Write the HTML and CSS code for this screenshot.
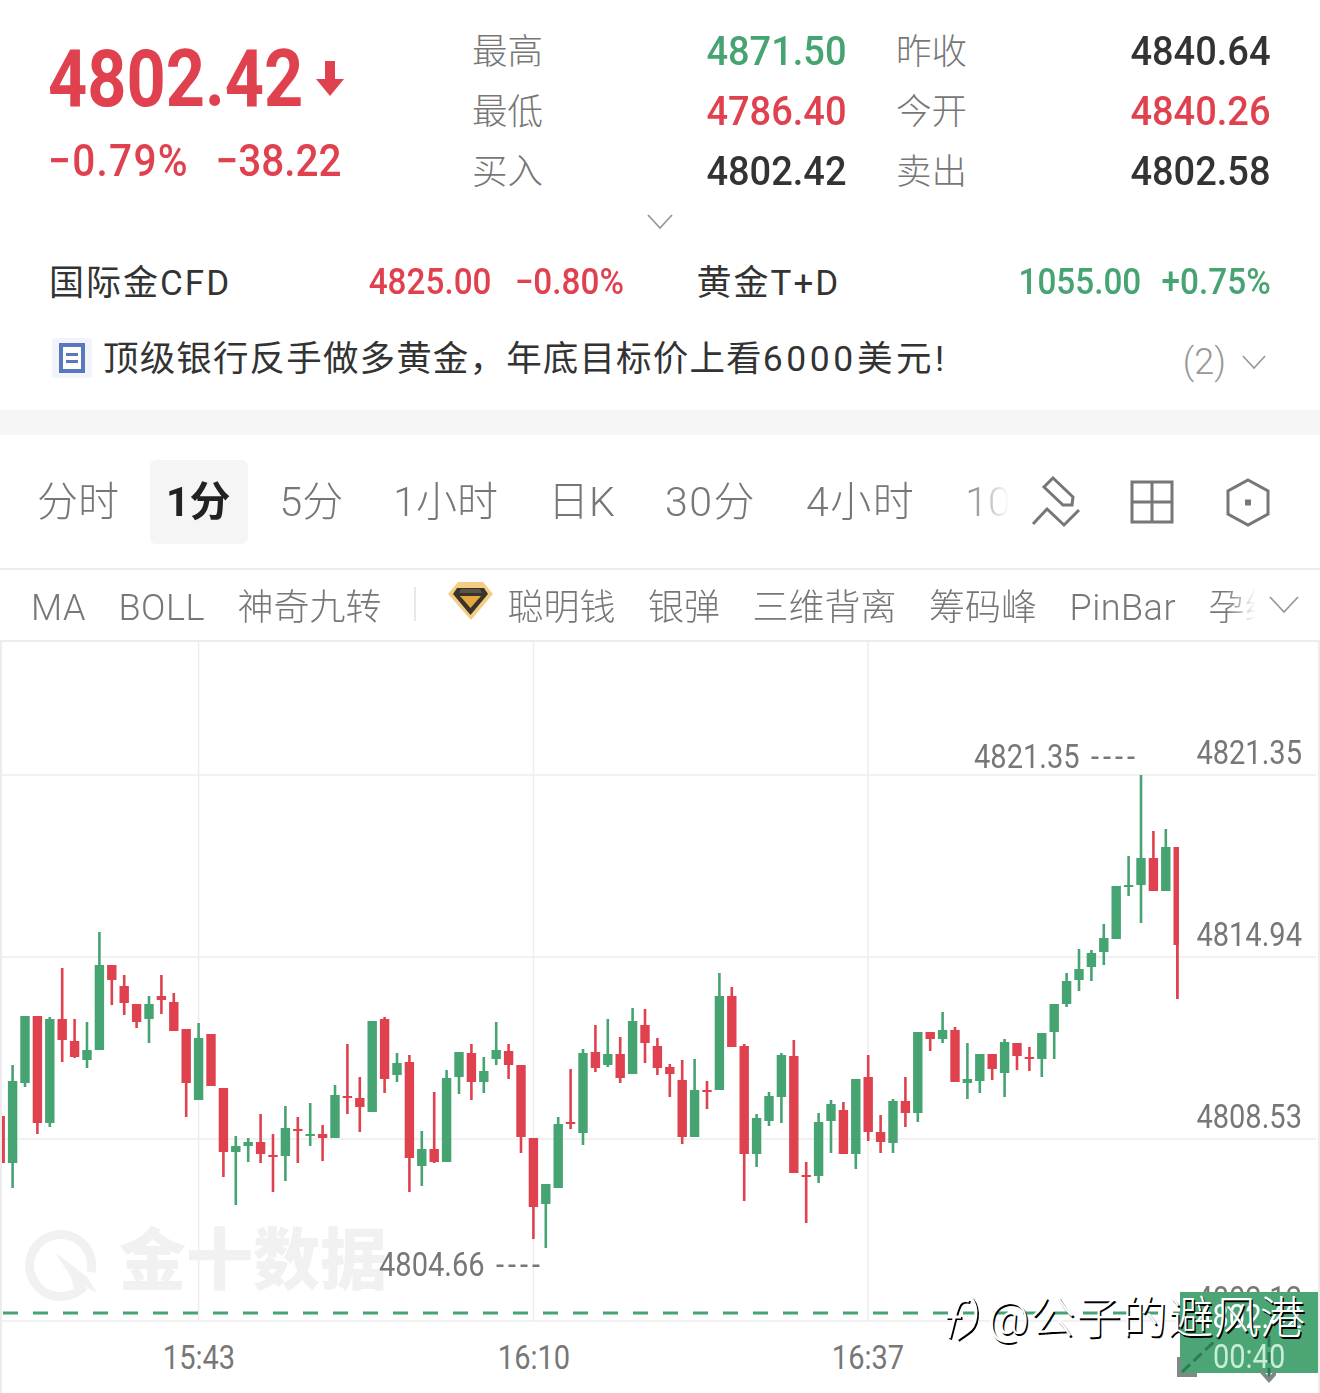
FILE: index.html
```html
<!DOCTYPE html>
<html lang="zh-CN">
<head>
	<meta charset="UTF-8">
	<title>现货黄金</title>
	<link rel="stylesheet" href="styles.css">
</head>
<body>
	<section class="summary">
		<div class="quote">
			<div class="price_box">
				<div class="price">
					<span class="price_num">4802.42</span>
					<svg class="price_arrow" viewBox="0 0 28 35"><path d="M9 0h10v18h9L14 35 0 18h9z"/></svg>
				</div>
				<div class="change"><span>−0.79%</span><span>−38.22</span></div>
			</div>
			<div class="stats">
				<div class="stat"><span class="stat_name">最高</span><span class="num up">4871.50</span></div>
				<div class="stat"><span class="stat_name">昨收</span><span class="num">4840.64</span></div>
				<div class="stat"><span class="stat_name">最低</span><span class="num down">4786.40</span></div>
				<div class="stat"><span class="stat_name">今开</span><span class="num down">4840.26</span></div>
				<div class="stat"><span class="stat_name">买入</span><span class="num">4802.42</span></div>
				<div class="stat"><span class="stat_name">卖出</span><span class="num">4802.58</span></div>
			</div>
		</div>
		<div class="more">
			<svg class="chevron" viewBox="0 0 26 16"><path d="M1 1l12 13L25 1"/></svg>
		</div>
		<div class="markets">
			<div class="market">
				<span class="market_name">国际金CFD</span>
				<span class="market_vals down"><span>4825.00</span><span>−0.80%</span></span>
			</div>
			<div class="market">
				<span class="market_name">黄金T+D</span>
				<span class="market_vals up"><span>1055.00</span><span>+0.75%</span></span>
			</div>
		</div>
		<div class="news">
			<span class="news_icon"><span class="news_doc"></span></span>
			<span class="news_title">顶级银行反手做多黄金，年底目标价上看<span class="news_wide">6000美元!</span></span>
			<span class="news_count">(2)</span>
			<svg class="chevron news_more" viewBox="0 0 26 16"><path d="M1 1l12 13L25 1"/></svg>
		</div>
	</section>

	<div class="band"></div>

	<nav class="periods">
		<div class="period_list">
			<span class="period">分时</span>
			<span class="period on">1分</span>
			<span class="period">5分</span>
			<span class="period">1小时</span>
			<span class="period">日K</span>
			<span class="period period_wide">30分</span>
			<span class="period period_wide">4小时</span>
			<span class="period">10</span>
		</div>
		<div class="tools">
			<svg class="tool" viewBox="70 24 52 52"><path d="M93 26l20 19-1 8h-9L84 35zM73 72l14-15 17 16 15-15"/></svg>
			<svg class="tool" viewBox="0 0 52 52"><path d="M6 6h40v40H6zM26 6v40M6 26h40"/></svg>
			<svg class="tool" viewBox="0 0 52 52"><path d="M26 4l20 11v23L26 49 6 38V15z"/><rect class="tool_dot" x="23" y="23.5" width="6" height="6"/></svg>
		</div>
	</nav>

	<nav class="indicators">
		<div class="indicator_list">
			<span class="latin">MA</span>
			<span class="latin">BOLL</span>
			<span>神奇九转</span>
			<i class="divider"></i>
			<span class="smart">
				<svg class="diamond" viewBox="0 0 45 38">
					<path class="gem_rim" d="M10 0h25l10 12-22 26L0 12z"/>
					<path class="gem_dark" d="M9 6h27l4 6-17.500 21L5 12z"/>
					<path class="gem_gold" d="M12 14h21L22.500 26z"/>
					<path class="gem_top" d="M13 7h19l2 4H11z"/>
				</svg>
				<b class="smart_name">聪明钱</b>
			</span>
			<span>银弹</span>
			<span>三维背离</span>
			<span>筹码峰</span>
			<span class="latin">PinBar</span>
			<span>孕线</span>
		</div>
		<svg class="chevron indicator_more" viewBox="0 0 30 18"><path d="M1 1l14 15L29 1"/></svg>
	</nav>

	<div class="chart">
		<svg class="plot" viewBox="0 642 1320 751">
			<path class="grid" d="M2 775H1316M2 957H1316M2 1139H1316M2 1321H1316M198.600 642V1321M533.500 642V1321M868 642V1321"/>
			<g class="logo_mark">
				<path class="logo_ring" d="M84 1286A31 31 0 1 1 91 1272"/>
				<path class="logo_arrow" d="M55 1252l32 25 10 16-14-8-9 4-3-12z"/>
			</g>
			<line class="last_line" x1="2" y1="1313" x2="1180" y2="1313"/>
			<g id="candles"></g>
			<path class="frame" d="M1 642V1393M1319 642V1393"/>
		</svg>

		<div class="logo_text">金十数据</div>

		<div class="axis">
			<span>4821.35</span>
			<span>4814.94</span>
			<span>4808.53</span>
			<span>4802.12</span>
		</div>
		<div class="extreme extreme_high"><span>4821.35</span><i>----</i></div>
		<div class="extreme extreme_low"><span>4804.66</span><i>----</i></div>
		<div class="times">
			<span>15:43</span>
			<span>16:10</span>
			<span>16:37</span>
		</div>

		<div class="last_tag">
			<span>4802.42</span>
			<span class="countdown">00:40</span>
		</div>
		<svg class="zoom_arrows" viewBox="0 0 100 60">
			<path class="zoom_dash" d="M6 48L42 14M93 12V55"/>
			<path class="zoom_head" d="M3 33v18h18M85 47l8 9 8-9"/>
		</svg>

		<div class="stamp">
			<svg class="stamp_icon" viewBox="0 0 42 50">
				<path class="stamp_under" d="M8 44c4-14 6-26 9-32 2-5 7-6 11-5M5 23h15M30 4c8 10 6 28-4 34l-10 7"/>
				<path class="stamp_over" d="M8 44c4-14 6-26 9-32 2-5 7-6 11-5M5 23h15M30 4c8 10 6 28-4 34l-10 7"/>
			</svg>
			<span>@公子的避风港</span>
		</div>
	</div>

	<script src="chart.js"></script>
</body>
</html>
```

FILE: styles.css
```css
*{box-sizing:border-box;}
body{margin:0;width:1320px;height:1393px;overflow:hidden;background:#fff;color:#333;font-family:Roboto,"Noto Sans CJK SC",sans-serif;}
i{font-style:normal;}
b{font-weight:inherit;}

.down{color:#e0414f;}
.up{color:#46a372;}

.summary{height:410px;padding:0 49px 0 50px;}
.quote{display:flex;height:200px;}
.price_box{width:423px;padding-top:40px;color:#e0414f;}
.price{display:flex;align-items:center;height:78px;margin-left:-2px;font-size:80px;font-weight:700;}
.price_num{flex:none;width:268px;transform:scaleX(.855);transform-origin:left center;white-space:nowrap;}
.price_arrow{width:28px;height:35px;margin-top:-2px;fill:#e0414f;}
.change{display:flex;margin:21px 0 0 -2px;font-size:45px;line-height:44px;font-weight:500;transform:scaleX(.9);transform-origin:left center;}
.change span:first-child{width:186px;letter-spacing:1.500px;}
.stats{display:grid;grid-template-columns:374px 374px;grid-auto-rows:60px;column-gap:50px;width:798px;padding-top:21px;}
.stat{display:flex;justify-content:space-between;align-items:center;}
.stat_name{width:234px;margin-left:-1px;padding-bottom:6px;font-size:35.500px;font-weight:300;color:#777;}
.num{font-size:40px;font-weight:500;transform:scaleX(.95);transform-origin:right center;}
.stat .num:not(.up):not(.down){color:#333;}

.chevron{display:block;fill:none;stroke:#999;stroke-width:1.800;}
.more{display:flex;justify-content:center;width:1220px;height:64px;padding-top:14px;}
.more .chevron{width:26px;height:16px;}

.markets{display:flex;gap:74px;height:36px;align-items:center;}
.market{display:flex;justify-content:space-between;align-items:center;width:574px;}
.market_name{margin-left:-1px;padding-bottom:6px;font-size:35px;letter-spacing:2px;}
.market_vals{display:flex;gap:25px;font-size:36px;font-weight:500;transform:scaleX(.925);transform-origin:right center;}
.market_vals.up{gap:22px;}

.news{display:flex;align-items:center;height:60px;margin-top:28px;}
.news_icon{display:flex;justify-content:center;align-items:center;width:40px;height:40px;margin-left:2px;background:#f2f4fa;border-radius:3px;}
.news_doc{width:26px;height:30px;background:linear-gradient(#5a76bf,#5a76bf) 3px 6px/12px 3px no-repeat,linear-gradient(#5a76bf,#5a76bf) 3px 13px/12px 3px no-repeat,#fff;border:4px solid #5a76bf;}
.news_title{margin-left:11px;padding-bottom:6px;font-size:35.500px;letter-spacing:1.150px;color:#333;white-space:nowrap;}
.news_wide{letter-spacing:3.600px;}
.news_count{margin-left:auto;padding-top:8px;font-size:36px;font-weight:300;color:#999;}
.news_more{width:24px;height:15px;margin:8px 5px 0 16px;}

.band{height:25px;background:#f6f6f6;}

.periods{display:flex;align-items:center;height:135px;padding-left:19px;border-bottom:2px solid #ececec;}
.period_list{display:flex;gap:14px;width:1011px;overflow:hidden;flex:none;-webkit-mask-image:linear-gradient(to right,#000 945px,transparent 990px);mask-image:linear-gradient(to right,#000 945px,transparent 990px);}
.period{flex:none;height:84px;line-height:84px;padding:0 18px;font-size:41px;font-weight:300;color:#777;border-radius:6px;}
.period_wide{letter-spacing:1.500px;}
.period.on{margin-left:-1px;padding:0 17px 0 16px;background:#f5f5f5;color:#222;font-weight:700;}
.tools{display:flex;gap:44px;}
.tool{width:52px;height:52px;fill:none;stroke:#777;stroke-width:3;}
.tool_dot{fill:#777;stroke:none;}

.indicators{display:flex;align-items:center;height:72px;padding:0 21px 2px 31px;border-bottom:2px solid #ececec;}
.indicator_list{display:flex;align-items:baseline;gap:32.500px;width:1236px;overflow:hidden;font-size:36px;font-weight:300;color:#777;white-space:nowrap;-webkit-mask-image:linear-gradient(to right,#000 1195px,transparent 1225px);mask-image:linear-gradient(to right,#000 1195px,transparent 1225px);}
.indicator_list span{flex:none;}
.indicator_list .latin{letter-spacing:.5px;}
.divider{flex:none;align-self:center;width:2px;height:34px;background:#e8e8e8;}
.smart{display:flex;align-items:baseline;gap:14px;}
.diamond{align-self:center;width:45px;height:38px;margin-bottom:6px;}
.gem_rim{fill:#f3cd86;}
.gem_dark{fill:#3b3327;}
.gem_gold{fill:#e5a83e;}
.gem_top{fill:#5a5348;}
.indicator_more{flex:none;width:30px;height:18px;margin:2px 0 0 auto;}

.chart{position:relative;height:751px;}
.plot{display:block;width:1320px;height:751px;}
.grid{fill:none;stroke:#ededed;stroke-width:1.500;}
.logo_ring{fill:none;stroke:#f1f1f1;stroke-width:9;}
.logo_arrow{fill:#f1f1f1;}
.last_line{stroke:#46a372;stroke-width:3;stroke-dasharray:15 15;stroke-dashoffset:-1;}
.frame{fill:none;stroke:#ececec;stroke-width:2;}

.logo_text{position:absolute;left:119px;top:574px;font-size:67px;line-height:90px;font-weight:900;color:#f1f1f1;}

.axis{position:absolute;top:91px;right:18px;display:flex;flex-direction:column;gap:142px;align-items:flex-end;}
.axis span,.extreme,.times span,.last_tag span{font-size:33px;line-height:40px;color:#777;}
.axis span{transform:scaleX(.88);transform-origin:right center;}
.extreme{position:absolute;display:flex;gap:13px;transform:scaleX(.88);transform-origin:left center;}
.extreme_high{left:974px;top:95px;}
.extreme_low{left:379px;top:603px;}
.extreme i{letter-spacing:4.500px;}

.times{position:absolute;left:0;top:696px;}
.times span{position:absolute;transform:translateX(-50%) scaleX(.88);white-space:nowrap;}
.times span:nth-child(1){left:199px;}
.times span:nth-child(2){left:533.500px;}
.times span:nth-child(3){left:868px;}

.last_tag{position:absolute;left:1180px;top:650px;display:flex;flex-direction:column;align-items:center;justify-content:space-between;width:138px;height:81px;padding:5px 0 0;background:#4ca575;}
.last_tag span{color:#fff;transform:scaleX(.88);}
.last_tag .countdown{color:#c9edd9;}
.zoom_arrows{position:absolute;left:1176px;top:682px;width:100px;height:60px;fill:none;}
.zoom_dash{stroke:#2d7a54;stroke-width:3;stroke-dasharray:11 5;}
.zoom_head{stroke:#808a85;stroke-width:4;}

.stamp{position:absolute;left:941px;top:652px;display:flex;align-items:center;gap:2px;font-size:45px;font-weight:300;letter-spacing:1px;line-height:50px;color:#fff;text-shadow:1.500px 1.500px 0 #000;}
.stamp span{padding-left:3px;}
.stamp_icon{width:42px;height:50px;fill:none;overflow:visible;}
.stamp_under{stroke:#000;stroke-width:3;transform:translate(1.500px,1.500px);}
.stamp_over{stroke:#fff;stroke-width:3;}
```

FILE: chart.js
```js
// high, low, body top, body bottom, colour. All y values are page pixels.
var bars = [
	[1116,1163,1116,1163,"r"],[1065,1188,1081,1163,"g"],[1016,1087,1016,1083,"g"],[1016,1134,1016,1123,"r"],
	[1017,1127,1019,1123,"g"],[968,1062,1019,1040,"r"],[1019,1058,1041,1057,"r"],[1022,1068,1050,1060,"g"],
	[932,1050,965,1050,"g"],[965,1005,965,980,"r"],[975,1015,986,1003,"r"],[1004,1028,1004,1022,"r"],
	[996,1043,1004,1019,"g"],[975,1014,996,1000,"r"],[993,1031,1002,1031,"r"],[1029,1117,1029,1083,"r"],
	[1023,1100,1038,1100,"g"],[1034,1086,1034,1086,"r"],[1088,1177,1088,1152,"r"],[1136,1205,1146,1152,"g"],
	[1138,1162,1142,1146,"g"],[1114,1163,1142,1154,"r"],[1134,1192,1155,1156,"r"],[1106,1181,1128,1156,"g"],
	[1117,1163,1129,1131,"r"],[1103,1146,1134,1136,"g"],[1125,1161,1134,1138,"r"],[1085,1138,1095,1138,"g"],
	[1044,1114,1096,1097,"r"],[1077,1132,1098,1107,"r"],[1021,1112,1021,1112,"g"],[1017,1093,1019,1079,"r"],
	[1053,1082,1063,1075,"g"],[1055,1192,1062,1158,"r"],[1131,1186,1149,1166,"g"],[1092,1163,1149,1162,"r"],
	[1070,1162,1078,1162,"g"],[1052,1094,1052,1077,"g"],[1044,1100,1053,1082,"r"],[1057,1093,1071,1082,"g"],
	[1022,1065,1050,1059,"g"],[1044,1079,1051,1065,"r"],[1065,1153,1065,1137,"r"],[1138,1239,1138,1207,"r"],
	[1184,1248,1184,1204,"g"],[1117,1188,1124,1188,"g"],[1069,1129,1122,1123,"r"],[1049,1145,1053,1133,"g"],
	[1025,1072,1052,1068,"r"],[1019,1067,1054,1065,"g"],[1037,1083,1054,1078,"r"],[1008,1074,1021,1074,"g"],
	[1009,1063,1025,1043,"r"],[1038,1075,1046,1068,"r"],[1064,1097,1067,1074,"r"],[1060,1144,1080,1137,"r"],
	[1059,1137,1090,1137,"g"],[1081,1109,1090,1091,"r"],[973,1090,996,1090,"g"],[987,1047,996,1047,"r"],
	[1044,1201,1046,1154,"r"],[1114,1167,1118,1154,"g"],[1092,1126,1096,1121,"g"],[1053,1123,1055,1097,"g"],
	[1040,1173,1056,1173,"r"],[1162,1223,1175,1176,"r"],[1113,1183,1122,1176,"g"],[1100,1153,1104,1121,"g"],
	[1102,1154,1110,1154,"r"],[1079,1169,1079,1154,"g"],[1055,1141,1077,1132,"r"],[1115,1153,1132,1142,"r"],
	[1099,1153,1101,1143,"g"],[1077,1127,1101,1113,"r"],[1032,1122,1032,1113,"g"],[1032,1051,1032,1039,"r"],
	[1012,1043,1030,1039,"g"],[1027,1082,1030,1082,"r"],[1043,1099,1079,1083,"g"],[1054,1093,1054,1081,"g"],
	[1054,1080,1054,1069,"r"],[1039,1097,1042,1073,"g"],[1043,1070,1043,1056,"r"],[1047,1071,1057,1059,"r"],
	[1033,1077,1033,1059,"g"],[1004,1059,1004,1032,"g"],[973,1007,981,1004,"g"],[949,991,969,980,"g"],
	[950,981,953,967,"g"],[924,965,938,952,"g"],[886,939,886,939,"g"],[856,896,885,886,"g"],
	[775,923,858,885,"g"],[831,891,858,891,"r"],[829,891,847,891,"g"]
];

var colours = {r:"#e0414f", g:"#46a372"};
var ns = "http://www.w3.org/2000/svg";
var box = document.getElementById("candles");

function addRect(x, y, w, h, fill){
	var r = document.createElementNS(ns, "rect");
	r.setAttribute("x", x);
	r.setAttribute("y", y);
	r.setAttribute("width", w);
	r.setAttribute("height", Math.max(h, 2));
	r.setAttribute("fill", fill);
	box.appendChild(r);
}

bars.forEach(function(b, i){
	var x = 0.2 + i * 12.4;
	addRect(x - 1.3, b[0], 2.6, b[1] - b[0], colours[b[4]]);
	addRect(x - 4.7, b[2], 9.4, b[3] - b[2], colours[b[4]]);
});

// the candle still forming is narrower and sits left of its wick
addRect(1176, 847, 2.8, 152, colours.r);
addRect(1173.5, 847, 5.5, 98, colours.r);
```
